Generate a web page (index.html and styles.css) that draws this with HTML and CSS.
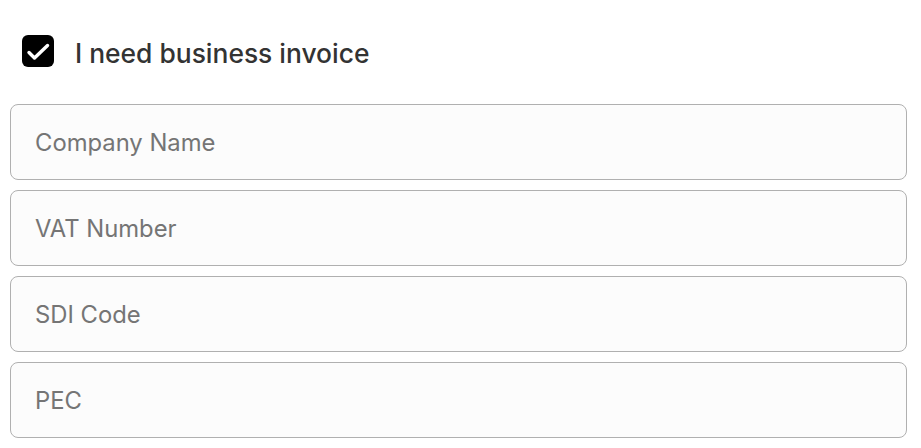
FILE: index.html
```html
<!DOCTYPE html>
<html lang="en">
<head>
    <meta charset="UTF-8">
    <meta name="viewport" content="width=device-width, initial-scale=1.0">
    <title>Business Invoice</title>
    <link rel="stylesheet" href="styles.css">
</head>
<body>
    <form class="invoice-form">
        <label class="check-row">
            <input type="checkbox" class="check-input" checked>
            <span class="check-box">
                <svg viewBox="0 0 32 32" width="32" height="32"><path d="M7 17.5l5.5 5.5L25.5 10.5" fill="none" stroke="#fff" stroke-width="3.4" stroke-linecap="round" stroke-linejoin="round"/></svg>
            </span>
            <span class="check-label">I need business invoice</span>
        </label>

        <div class="fields">
            <input type="text" class="field" placeholder="Company Name">
            <input type="text" class="field" placeholder="VAT Number">
            <input type="text" class="field" placeholder="SDI Code">
            <input type="text" class="field" placeholder="PEC">
        </div>
    </form>
</body>
</html>
```

FILE: styles.css
```css
body {
    font-family: 'Inter', 'Liberation Sans', sans-serif;
    background: #fff;
    margin: 0;
    padding: 35px 14px 0 10px;
}

.invoice-form {
    display: flex;
    flex-direction: column;
    gap: 35px;
}

.check-row {
    display: flex;
    align-items: flex-start;
    gap: 21px;
    padding-left: 12px;
    cursor: pointer;
}

.check-input {
    display: none;
}

.check-box {
    width: 32px;
    height: 32px;
    border-radius: 6px;
    background: #000;
    display: flex;
}

.check-label {
    font-size: 26.4px;
    line-height: 32px;
    font-weight: 500;
    color: #333;
    padding-top: 2px;
}

.fields {
    display: flex;
    flex-direction: column;
    gap: 10px;
}

.field {
    height: 76px;
    box-sizing: border-box;
    border: 1px solid #b0b0b0;
    border-radius: 8px;
    background: #fcfcfc;
    padding: 0 24px;
    font-family: inherit;
    font-size: 23.8px;
    color: #333;
    outline: none;
}

.field::placeholder {
    color: #757575;
}
```
